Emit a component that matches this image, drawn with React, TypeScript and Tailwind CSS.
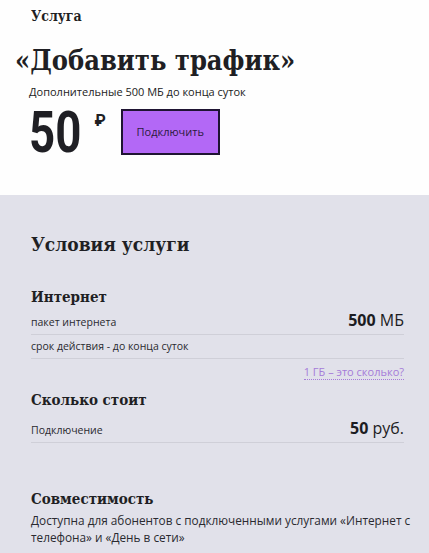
import React from "react";

function Row({ label, value, unit, className = "" }: { label: string; value?: string; unit?: string; className?: string }) {
  return (
    <div className={"flex items-end justify-between border-b border-[#cfcfd8] pb-[5px] " + className}>
      <span className="font-['Open_Sans',sans-serif] text-[10.5px] leading-[14px] text-[#2a2a30]">{label}</span>
      {value && (
        <span className="font-['Open_Sans',sans-serif] text-[16px] leading-[18px] text-[#1c1c22]">
          <b className="font-bold">{value}</b> {unit}
        </span>
      )}
    </div>
  );
}

function SubHead({ children, className }: { children: React.ReactNode; className: string }) {
  return (
    <div className={"font-['DejaVu_Serif',serif] font-stretch-condensed text-[15px] leading-[20px] font-bold text-[#1f1f24] " + className}>
      {children}
    </div>
  );
}

export default function App() {
  return (
    <div className="h-[553px] w-[429px] overflow-hidden bg-[#e1e1ea]">
      <div className="h-[195px] bg-[#fefefe] pl-[31px] pt-[6px]">
        <div className="font-['DejaVu_Serif',serif] font-stretch-condensed text-[14px] leading-[20px] font-bold text-[#1f1f24]">
          Услуга
        </div>
        <div className="-ml-[16px] mt-[19px] font-['DejaVu_Serif',serif] font-stretch-condensed text-[27px] leading-[32px] font-bold text-[#1f1f24]">
          «Добавить трафик»
        </div>
        <div className="-ml-[2px] mt-[7px] font-['Open_Sans',sans-serif] text-[11px] leading-[16px] text-[#222]">
          Дополнительные 500 МБ до конца суток
        </div>
        <div className="-ml-[2px] mt-[4px] flex items-start">
          <span className="origin-left scale-x-80 font-['Roboto',sans-serif] text-[57px] leading-none font-bold text-[#1f1f24]">
            50
          </span>
          <span className="mt-[8px] font-['Roboto',sans-serif] text-[16px] leading-[18px] font-bold text-[#1f1f24]">₽</span>
          <button className="ml-[15px] mt-[5px] h-[46px] w-[99px] border-2 border-[#1f1433] bg-[#b368f6] font-['Open_Sans',sans-serif] text-[11px] text-[#2b1a3d]">
            Подключить
          </button>
        </div>
      </div>
      <div className="pl-[31px] pr-[25px] pt-[36px]">
        <div className="font-['DejaVu_Serif',serif] font-stretch-condensed text-[19px] leading-[26px] font-bold text-[#1f1f24]">
          Условия услуги
        </div>
        <SubHead className="mt-[30px]">Интернет</SubHead>
        <Row label="пакет интернета" value="500" unit="МБ" className="pt-[4px]" />
        <Row label="срок действия - до конца суток" className="pt-[4px]" />
        <div className="mt-[6px] flex justify-end">
          <span className="border-b border-dotted border-[#a57bd9] font-['Open_Sans',sans-serif] text-[11px] leading-[14px] text-[#a57bd9]">
            1 ГБ – это сколько?
          </span>
        </div>
        <SubHead className="mt-[10px]">Сколько стоит</SubHead>
        <Row label="Подключение" value="50" unit="руб." className="pt-[9px]" />
        <SubHead className="mt-[46px]">Совместимость</SubHead>
        <div className="mt-[3px] font-['Open_Sans',sans-serif] text-[11.8px] leading-[17px] text-[#2a2a30]">
          <div className="whitespace-nowrap">Доступна для абонентов с подключенными услугами «Интернет с</div>
          <div className="whitespace-nowrap">телефона» и «День в сети»</div>
        </div>
      </div>
    </div>
  );
}
